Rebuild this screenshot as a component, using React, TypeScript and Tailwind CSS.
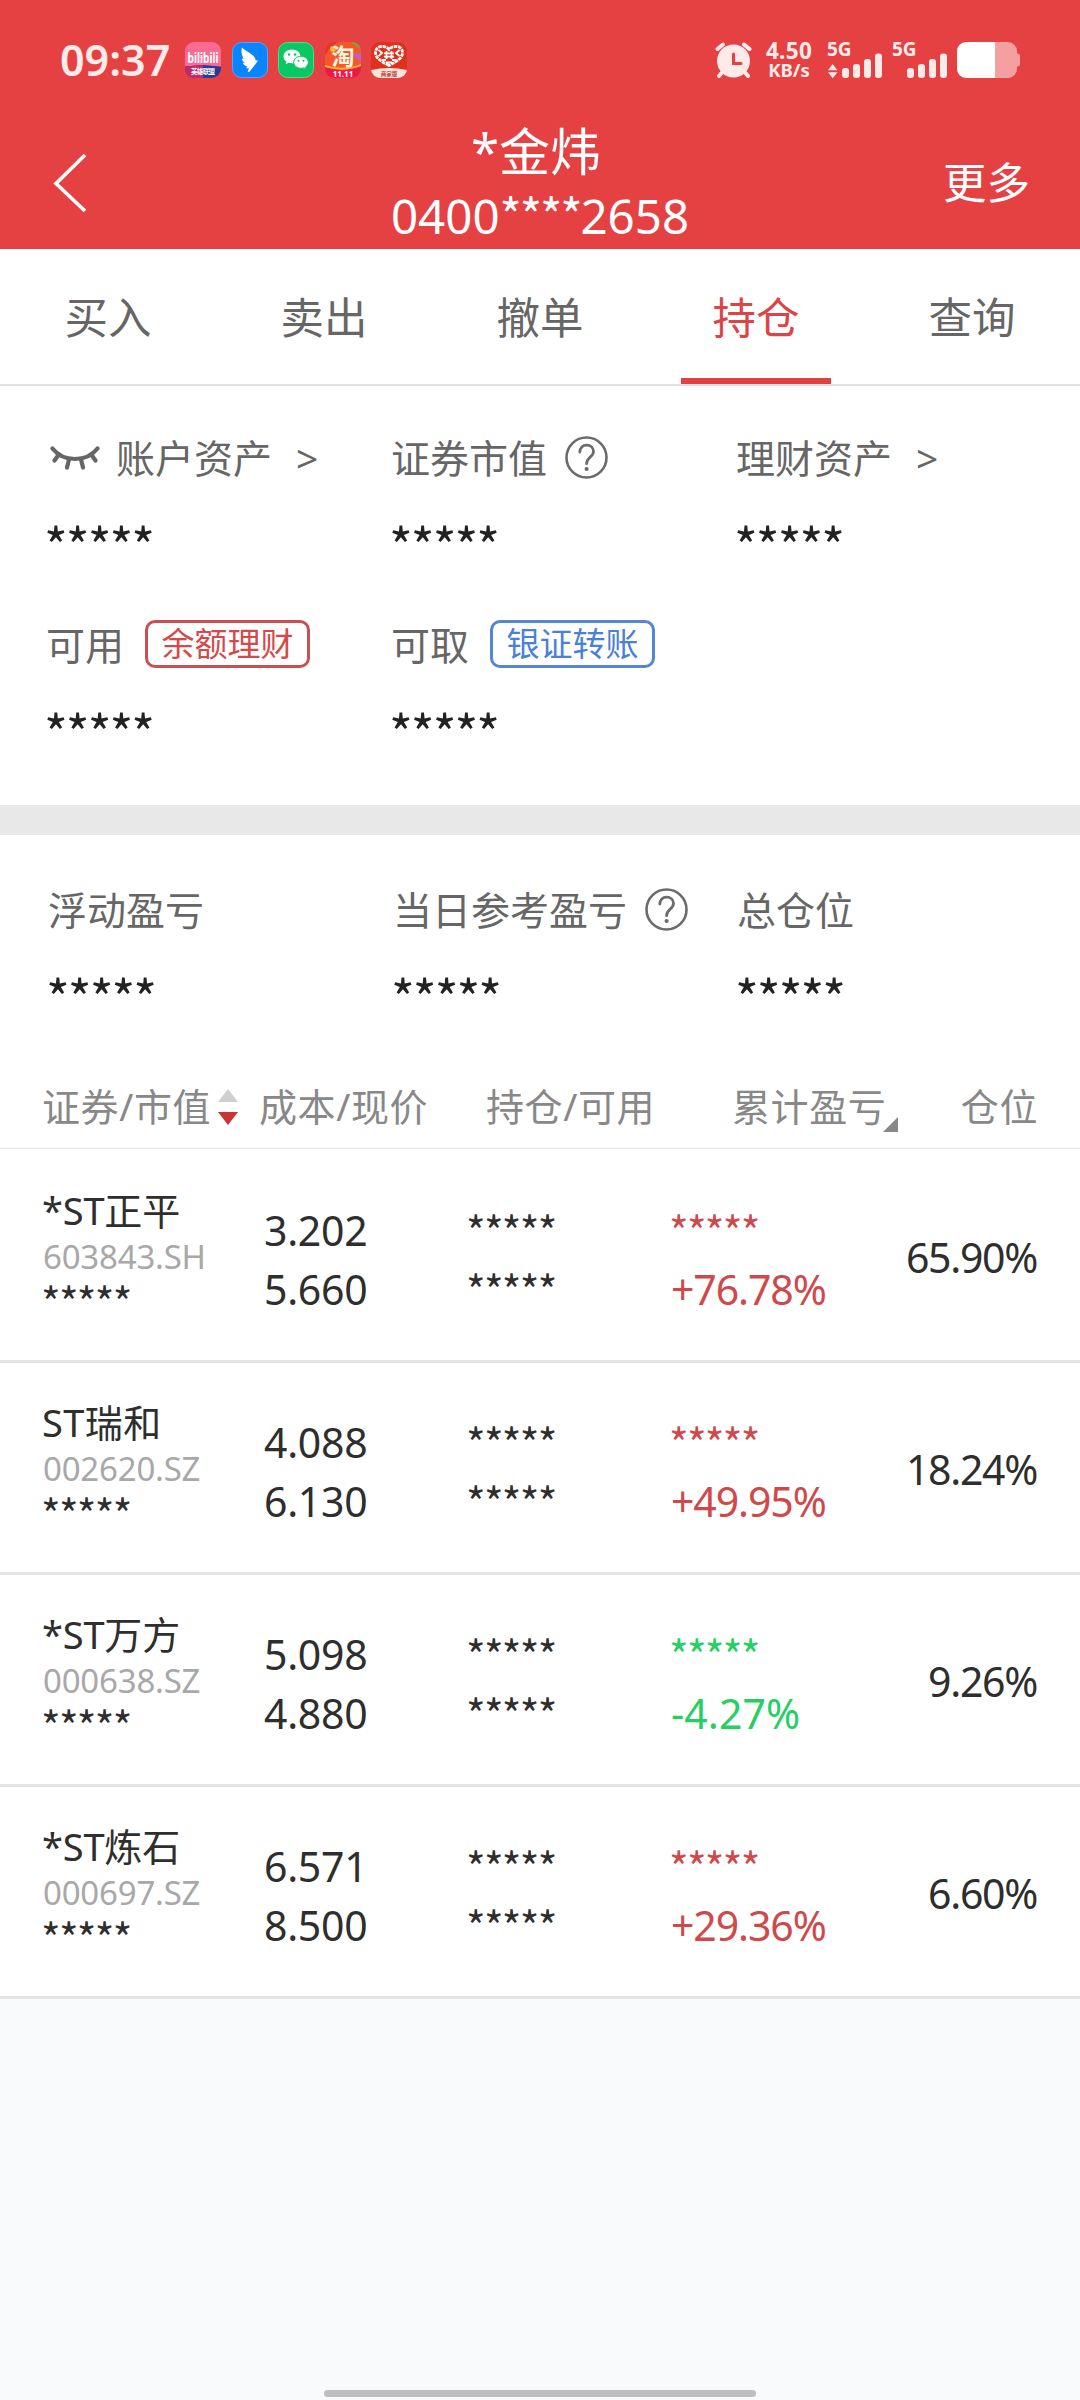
import type { ReactNode } from "react";

const tabs = ["买入", "卖出", "撤单", "持仓", "查询"];
const activeTab = "持仓";

const holdings = [
  { flag: "*", name: "ST正平", code: "603843.SH", cost: "3.202", price: "5.660", change: "+76.78%", weight: "65.90%" },
  { flag: "", name: "ST瑞和", code: "002620.SZ", cost: "4.088", price: "6.130", change: "+49.95%", weight: "18.24%" },
  { flag: "*", name: "ST万方", code: "000638.SZ", cost: "5.098", price: "4.880", change: "-4.27%", weight: "9.26%" },
  { flag: "*", name: "ST炼石", code: "000697.SZ", cost: "6.571", price: "8.500", change: "+29.36%", weight: "6.60%" },
];

function Stars() {
  return (
    <div className="-ml-[2px] h-12 font-['Noto_Sans_CJK_SC',sans-serif] text-[51px] leading-[53px] tracking-[-2px] text-[#222]">
      *****
    </div>
  );
}

function SmallStars() {
  return (
    <span className="-ml-[2px] block font-['Noto_Sans_CJK_SC',sans-serif] text-[42px] tracking-[-1.700px]">
      *****
    </span>
  );
}

function HelpIcon() {
  return (
    <svg className="-mt-0.5 size-[43px]" viewBox="0 0 43 43" fill="none" stroke="#6b6b6b" strokeLinecap="round">
      <circle cx="21.5" cy="21.5" r="20" strokeWidth="2.6" />
      <path d="M14.800 16c.3-4 3-6.800 6.800-6.800 4 0 6.900 2.700 6.900 6.200 0 5.300-6.900 6.100-6.900 12.300" strokeWidth="2.8" />
      <circle cx="21.600" cy="33" r="2.100" fill="#6b6b6b" stroke="none" />
    </svg>
  );
}

function ClosedEyeIcon() {
  return (
    <svg className="h-6 w-[50px]" viewBox="0 0 50 24" fill="none" stroke="#666" strokeWidth="4.200" strokeLinecap="round">
      <path d="M2.500 2.500C8 9.500 16 13 25 13S42 9.500 47.500 2.500" />
      <path d="M8.500 9 4.500 14.500M19 13.500 17 21.500M31 13.500 33 21.500M41.500 9 45.500 14.500" />
    </svg>
  );
}

function AppIcons() {
  return (
    <div className="ml-[15px] flex gap-[10.500px]">
      <svg className="size-9 overflow-visible" viewBox="0 0 36 36">
        <clipPath id="biliClip">
          <rect width="36" height="36" rx="9" />
        </clipPath>
        <g clipPath="url(#biliClip)">
          <rect width="36" height="36" fill="#fb6a95" />
          <path d="M0 24.500 18 23l18 1.500V36H0z" fill="#2b3a94" />
          <path d="M0 24.500 18 23v13H0z" fill="#c02a66" />
        </g>
        <text x="18" y="20.500" textAnchor="middle" textLength="31" lengthAdjust="spacingAndGlyphs" fill="#fff" className="font-['Noto_Sans',sans-serif] text-[15px] font-bold">
          bilibili
        </text>
        <text x="18" y="32" textAnchor="middle" textLength="24" fill="#fff" className="font-['Noto_Sans_CJK_SC',sans-serif] text-[6.500px] font-bold">
          英雄联盟
        </text>
      </svg>
      <svg className="size-9" viewBox="0 0 36 36">
        <rect x=".5" y=".5" width="35" height="35" rx="9" fill="#0a84ff" stroke="#4aa8ff" />
        <path
          d="M10 5.500c2.500 3 8 5 11 8 2 2 2.600 3.400 2.400 4.800l2.600.4-3.600 4.800-5.200 6.500-1.500-.2 1.300-3.200-2.800-.4 1-1.600c-2.500-.8-3.800-2-4.600-3.800l2.400.4c-2-1.700-3-3.200-3.200-4.800l1.800.6C9.800 13.500 8.800 9.500 10 5.500z"
          fill="#fff"
        />
      </svg>
      <svg className="size-9" viewBox="0 0 36 36">
        <rect x=".5" y=".5" width="35" height="35" rx="9" fill="#07c863" stroke="#4ddb90" />
        <path d="M14 7.500c-4.800 0-8.500 3-8.500 6.900 0 2.200 1.200 4 3 5.300l-.8 2.500 3-1.500c1 .3 2.100.5 3.300.5 4.700 0 8.500-3 8.500-6.800S18.700 7.500 14 7.500z" fill="#fff" />
        <path d="M23 14.300c-4.200 0-7.300 2.700-7.300 6s3.100 6 7.300 6c1 0 1.900-.2 2.700-.4l2.500 1.300-.6-2.100c1.600-1.200 2.700-2.800 2.700-4.800 0-3.300-3.100-6-7.300-6z" fill="#fff" stroke="#07c863" strokeWidth="1" />
        <g fill="#07c863">
          <circle cx="11" cy="12.500" r="1.200" />
          <circle cx="17" cy="12.500" r="1.200" />
          <circle cx="20.500" cy="18.800" r="1" />
          <circle cx="25.500" cy="18.800" r="1" />
        </g>
      </svg>
      <svg className="size-9 overflow-visible" viewBox="0 0 36 36">
        <clipPath id="taoClip">
          <rect width="36" height="36" rx="9" />
        </clipPath>
        <g clipPath="url(#taoClip)">
          <rect width="36" height="36" fill="#f4582a" />
          <path d="M0 14C4 6 8 2 15 0H0z" fill="#e0372c" />
          <path d="M26 0h10v7z" fill="#62b53a" />
          <path d="M27 12l9 8v-9z" fill="#c35bd0" />
          <circle cx="8" cy="7" r="3" fill="#ffb02e" />
          <path d="M0 25q18 6 36-1v12H0z" fill="#f01848" />
          <path d="M0 23q18 6 36-1v2q-18 7-36 1z" fill="#ffb02e" />
        </g>
        <text x="18" y="23" textAnchor="middle" fill="#fff6e0" className="font-['Noto_Sans_CJK_SC',sans-serif] text-[23px] font-bold">
          淘
        </text>
        <text x="18" y="34.500" textAnchor="middle" fill="#fff" className="font-['Noto_Sans',sans-serif] text-[8px] font-bold">
          11.11
        </text>
      </svg>
      <svg className="size-9 overflow-visible" viewBox="0 0 36 36">
        <clipPath id="shopClip">
          <rect width="36" height="36" rx="9" />
        </clipPath>
        <g clipPath="url(#shopClip)">
          <rect width="36" height="36" fill="#e0301e" />
          <path d="M0 28q18-4 36 0v8H0z" fill="#fde3d8" />
        </g>
        <path d="M18 23.500C9 19 4.500 15.500 4.500 10.500 4.500 3.500 14 2.500 18 7.500c4-5 13.500-4 13.500 3 0 5-4.500 8.500-13.500 13z" fill="none" stroke="#fff" strokeWidth="2.800" strokeDasharray="3.500 .8" />
        <path d="M15.500 9v8M20.500 9v8M13 11.300h10M13 14.700h10M7.500 8l3.500 3-3.500 3M28.500 8 25 11l3.500 3M11 18h4M21 18h4M15 20.500h6" stroke="#fff" strokeWidth="1.800" fill="none" />
        <text x="18" y="34" textAnchor="middle" fill="#b4463c" className="font-['Noto_Sans_CJK_SC',sans-serif] text-[5.500px] font-bold">
          商家版
        </text>
      </svg>
    </div>
  );
}

function Signal({ arrows }: { arrows?: boolean }) {
  return (
    <svg className="h-9 w-[54px] overflow-visible" viewBox="0 0 54 36" fill="#ffeaea">
      <text x="-1" y="13.800" className="font-['Noto_Sans',sans-serif] text-[19px] font-bold">
        5G
      </text>
      {arrows && <path d="M0 28.200 4.700 22l4.700 6.200zM0 30.200h9.400L4.700 36.200z" />}
      <rect x="14" y="26" width="7" height="10" rx="3" />
      <rect x="25" y="22" width="7" height="14" rx="3" />
      <rect x="36" y="17" width="7" height="19" rx="3" />
      <rect x="47" y="11.500" width="7" height="24.500" rx="3" />
    </svg>
  );
}

function StatusBar() {
  return (
    <div className="flex h-[119px] items-center pr-[60px] pl-[60px]">
      <span className="text-[43px] leading-none font-semibold text-[#ffeaea]">09:37</span>
      <AppIcons />
      <div className="ml-auto flex items-center">
        <svg className="h-9 w-[37px]" viewBox="0 0 37 36" fill="none" stroke="#ffeaea" strokeWidth="4" strokeLinecap="round">
          <circle cx="18.500" cy="19" r="16.500" fill="#ffeaea" stroke="none" />
          <path d="M2.500 7 8 2.500M34.500 7 29 2.500M7 30.500 4 34M30 30.500 33 34" />
          <path d="M18.500 12v9.500H26" stroke="#e64142" strokeWidth="3" />
        </svg>
        <div className="ml-[10px] w-[54px] text-center font-bold text-[#ffeaea]">
          <div className="text-[22.500px] leading-[19px] tracking-[0.3px]">4.50</div>
          <div className="text-[18.500px] leading-[19px]">KB/s</div>
        </div>
        <div className="ml-[12px] flex gap-[11px]">
          <Signal arrows />
          <Signal />
        </div>
        <svg className="ml-[10px] h-9 w-[63px]" viewBox="0 0 63 36">
          <path d="M38 0h13a9 9 0 0 1 9 9v2.500q3 0 3 2.500v8q0 2.500-3 2.500V27a9 9 0 0 1-9 9H38z" fill="#f4a0a1" />
          <path d="M38 0H9a9 9 0 0 0-9 9v18a9 9 0 0 0 9 9h29z" fill="#fff" />
        </svg>
      </div>
    </div>
  );
}

function Label({ children }: { children: ReactNode }) {
  return <div className="flex h-14 items-center text-[39px] leading-[56px] whitespace-nowrap text-[#666]">{children}</div>;
}

export default function App() {
  return (
    <div className="flex h-[2400px] w-[1080px] flex-col overflow-hidden bg-[#f8fafc] font-['Noto_Sans','Noto_Sans_CJK_SC',sans-serif]">
      <header className="h-[249px] shrink-0 bg-[#e64142] text-white">
        <StatusBar />
        <div className="grid h-[126px] grid-cols-[1fr_auto_1fr] items-center">
          <svg className="ml-[53px] h-[60px] w-[34px]" viewBox="0 0 34 60" fill="none" stroke="#fff" strokeWidth="3.600">
            <path d="M32 2 3 30.500 32 58" />
          </svg>
          <div className="text-center">
            <div className="-translate-x-1 text-[51px] leading-[65px]">*金炜</div>
            <div className="text-[47.500px] leading-[63px]">
              0400
              <span className="font-['Noto_Sans_CJK_SC',sans-serif] text-[48px] leading-none tracking-[-2.200px]">****</span>
              2658
            </div>
          </div>
          <span className="mr-[50px] justify-self-end text-[43.500px]">更多</span>
        </div>
      </header>

      <nav className="grid h-[137px] shrink-0 grid-cols-5 border-b-2 border-[#e2e2e2] bg-white text-[43.500px] text-[#666]">
        {tabs.map((tab) =>
          tab === activeTab ? (
            <span key={tab} className="relative h-[135px] text-center leading-[137px] text-[#dc4446]">
              {tab}
              <i className="absolute bottom-0 left-[33px] h-1.5 w-[150px] bg-[#e04244]" />
            </span>
          ) : (
            <span key={tab} className="h-[135px] text-center leading-[137px]">
              {tab}
            </span>
          )
        )}
      </nav>

      <section className="grid shrink-0 grid-cols-[345px_345px_1fr] gap-y-[51px] bg-white pt-11 pb-[52px] pl-[46px]">
        <div className="space-y-8">
          <Label>
            <span className="ml-1 flex">
              <ClosedEyeIcon />
            </span>
            <span className="ml-4">账户资产</span>
            <span className="ml-[24px]">&gt;</span>
          </Label>
          <Stars />
        </div>
        <div className="space-y-8">
          <Label>
            证券市值
            <span className="ml-[18px]">
              <HelpIcon />
            </span>
          </Label>
          <Stars />
        </div>
        <div className="space-y-8">
          <Label>
            理财资产
            <span className="ml-[24px]">&gt;</span>
          </Label>
          <Stars />
        </div>
        <div className="space-y-8">
          <Label>
            可用
            <button className="-mt-0.5 ml-[21px] h-12 w-[165px] rounded-[10px] border-3 border-[#c94f50] text-[33px] leading-[42px] text-[#d5494a]">
              余额理财
            </button>
          </Label>
          <Stars />
        </div>
        <div className="space-y-8">
          <Label>
            可取
            <button className="-mt-0.5 ml-[21px] h-12 w-[165px] rounded-[10px] border-3 border-[#5585d6] text-[33px] leading-[42px] text-[#4a80d8]">
              银证转账
            </button>
          </Label>
          <Stars />
        </div>
      </section>

      <div className="h-[30px] shrink-0 bg-[#e8e8e8]" />

      <section className="grid shrink-0 grid-cols-[345px_344px_1fr] bg-white pt-[47px] pb-12 pl-12">
        <div className="space-y-8">
          <Label>浮动盈亏</Label>
          <Stars />
        </div>
        <div className="space-y-8">
          <Label>
            当日参考盈亏
            <span className="ml-[18px]">
              <HelpIcon />
            </span>
          </Label>
          <Stars />
        </div>
        <div className="space-y-8">
          <Label>总仓位</Label>
          <Stars />
        </div>
      </section>

      <div className="flex h-[83px] shrink-0 items-center border-b border-[#e2e2e2] bg-white pr-[42px] pl-[42px] text-[38px] leading-[80px] tracking-[0.6px] whitespace-nowrap text-[#888]">
        <div className="flex w-[217px] items-center">
          <span className="-mt-0.5">证券/市值</span>
          <svg className="ml-[7px] h-9 w-5" viewBox="0 0 20 36">
            <path d="M10 0l10 13H0z" fill="#cfcfcf" />
            <path d="M10 36 0 23h20z" fill="#cc3333" />
          </svg>
        </div>
        <div className="-mt-0.5 w-[227px]">成本/现价</div>
        <div className="-mt-0.5 w-[246px]">持仓/可用</div>
        <div className="-mt-0.5 flex items-center">
          累计盈亏
          <svg className="mt-[36px] -ml-[3px] size-[15px]" viewBox="0 0 15 15">
            <path d="M15 0v15H0z" fill="#888" />
          </svg>
        </div>
        <div className="-mt-0.5 ml-auto">仓位</div>
      </div>

      <ul className="shrink-0 bg-white pt-0.5 text-[#2e2e2e]">
        {holdings.map((item) => {
          const down = item.change.startsWith("-");
          return (
            <li key={item.code} className="flex h-[212px] border-b-3 border-[#e4e4e4] pr-[43px] pl-[43px]">
              <div className="w-[221px] pt-9">
                <div className={`-ml-px text-[38px] leading-[46px] ${item.flag ? "tracking-[-0.2px]" : "tracking-[0.4px]"}`}>
                  {item.flag}
                  {item.name}
                </div>
                <div className="mt-1 text-[33px] leading-10 tracking-[-0.2px] text-[#a8a8a8]">{item.code}</div>
                <div className="-mt-0.5 leading-[51px]">
                  <SmallStars />
                </div>
              </div>
              <div className="w-[204px] pt-[50px] text-[41px] leading-[59px] tracking-[-0.3px]">
                <div>{item.cost}</div>
                <div>{item.price}</div>
              </div>
              <div className="w-[203px] pt-[49px] leading-[59px]">
                <SmallStars />
                <SmallStars />
              </div>
              <div className={`pt-[49px] leading-[59px] ${down ? "text-[#26cf63]" : "text-[#d0494a]"}`}>
                <SmallStars />
                <div className={`pt-px text-[41px] ${down ? "tracking-[0.1px]" : "tracking-[-1.100px]"}`}>{item.change}</div>
              </div>
              <div className="ml-auto text-[41px] leading-[212px] tracking-[-1.300px]">{item.weight}</div>
            </li>
          );
        })}
      </ul>

      <div className="mx-auto mt-auto mb-[3px] h-[7px] w-[432px] shrink-0 rounded-full bg-[#bebec0]" />
    </div>
  );
}
